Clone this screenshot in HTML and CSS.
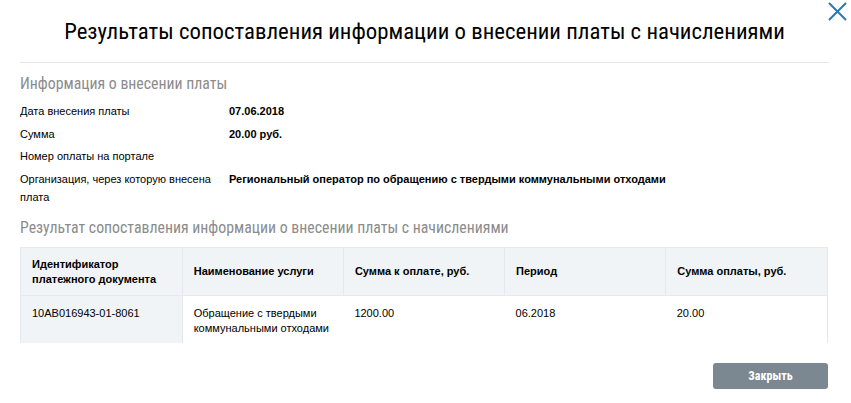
FILE: index.html
```html
<!DOCTYPE html>
<html lang="ru">
<head>
    <meta charset="UTF-8">
    <meta name="viewport" content="width=device-width, initial-scale=1.0">
    <title>Результаты сопоставления</title>
    <link rel="stylesheet" href="styles.css">
</head>
<body>
    <div class="modal">
        <button class="modal-close" type="button" aria-label="Закрыть">
            <svg width="19" height="19" viewBox="0 0 19 19">
                <path d="M1 1L18 18M18 1L1 18" stroke="#2e78ae" stroke-width="2" fill="none"/>
            </svg>
        </button>

        <h1 class="modal-title">Результаты сопоставления информации о внесении платы с начислениями</h1>

        <div class="modal-body">
            <h2 class="section-title">Информация о внесении платы</h2>

            <div class="info-row">
                <div class="info-label">Дата внесения платы</div>
                <div class="info-value">07.06.2018</div>
            </div>
            <div class="info-row">
                <div class="info-label">Сумма</div>
                <div class="info-value">20.00 руб.</div>
            </div>
            <div class="info-row">
                <div class="info-label">Номер оплаты на портале</div>
                <div class="info-value"></div>
            </div>
            <div class="info-row">
                <div class="info-label">Организация, через которую внесена плата</div>
                <div class="info-value">Региональный оператор по обращению с твердыми коммунальными отходами</div>
            </div>

            <h2 class="section-title section-title-2">Результат сопоставления информации о внесении платы с начислениями</h2>

            <div class="table-wrap">
                <table class="result-table">
                    <thead>
                        <tr>
                            <th>Идентификатор платежного документа</th>
                            <th>Наименование услуги</th>
                            <th>Сумма к оплате, руб.</th>
                            <th>Период</th>
                            <th>Сумма оплаты, руб.</th>
                        </tr>
                    </thead>
                    <tbody>
                        <tr>
                            <td class="col-id">10AB016943-01-8061</td>
                            <td>Обращение с твердыми коммунальными отходами</td>
                            <td>1200.00</td>
                            <td>06.2018</td>
                            <td>20.00</td>
                        </tr>
                    </tbody>
                </table>
            </div>
        </div>

        <div class="modal-footer">
            <button class="btn-close" type="button">Закрыть</button>
        </div>
    </div>
</body>
</html>
```

FILE: styles.css
```css
body {
    margin: 0;
    background-color: #fff;
    font-family: "Liberation Sans", Arial, sans-serif;
    color: #000;
}
.modal {
    position: relative;
    width: 851px;
    height: 403px;
    padding: 0 20px;
    box-sizing: border-box;
}
.modal-close {
    position: absolute;
    top: 2px;
    right: 4px;
    padding: 0;
    border: none;
    background: none;
    cursor: pointer;
}
.modal-title {
    margin: 0 2px 0 0;
    padding-top: 17px;
    height: 45px;
    border-bottom: 1px solid #e6e6e6;
    text-align: center;
    font-family: "Roboto Condensed", "Liberation Sans Narrow", "DejaVu Sans Condensed", sans-serif;
    font-stretch: condensed;
    font-weight: normal;
    font-size: 22.8px;
    line-height: 30px;
    color: #000;
}
.modal-body {
    height: 280px;
    overflow: hidden;
}
.section-title {
    margin: 0;
    padding-top: 11px;
    height: 28px;
    font-family: "Roboto Condensed", "Liberation Sans Narrow", "DejaVu Sans Condensed", sans-serif;
    font-stretch: condensed;
    font-weight: normal;
    font-size: 15.8px;
    line-height: 20px;
    color: #8c8c8c;
}
.section-title-2 {
    padding-top: 8px;
    height: 29px;
}
.info-row {
    display: flex;
    font-size: 11px;
    line-height: 18px;
    padding-bottom: 4.5px;
}
.info-label {
    width: 209px;
    flex-shrink: 0;
}
.info-value {
    font-weight: bold;
}
.table-wrap {
    border: 1px solid #e4e9ed;
    border-bottom: none;
    height: 100px;
    margin-right: 3px;
}
.result-table {
    width: 100%;
    border-collapse: collapse;
    table-layout: fixed;
    font-size: 11px;
    line-height: 15px;
}
.result-table th {
    height: 47px;
    padding: 0 11px;
    background-color: #f0f4f7;
    border-right: 1px solid #e4e9ed;
    border-bottom: 1px solid #e4e9ed;
    text-align: left;
    font-weight: bold;
}
.result-table th:last-child {
    border-right: none;
}
.result-table td {
    padding: 10px 11px;
    vertical-align: top;
}
.result-table td.col-id {
    background-color: #f0f4f7;
    border-right: 1px solid #e4e9ed;
    height: 60px;
}
.modal-footer {
    display: flex;
    justify-content: flex-end;
    padding-top: 20px;
    margin-right: 3px;
}
.btn-close {
    width: 115px;
    height: 26px;
    border: none;
    border-radius: 3px;
    background-color: #7b8791;
    color: #fff;
    font-family: "Roboto Condensed", "Liberation Sans Narrow", "DejaVu Sans Condensed", sans-serif;
    font-stretch: condensed;
    font-weight: bold;
    font-size: 12px;
    cursor: pointer;
}
```
